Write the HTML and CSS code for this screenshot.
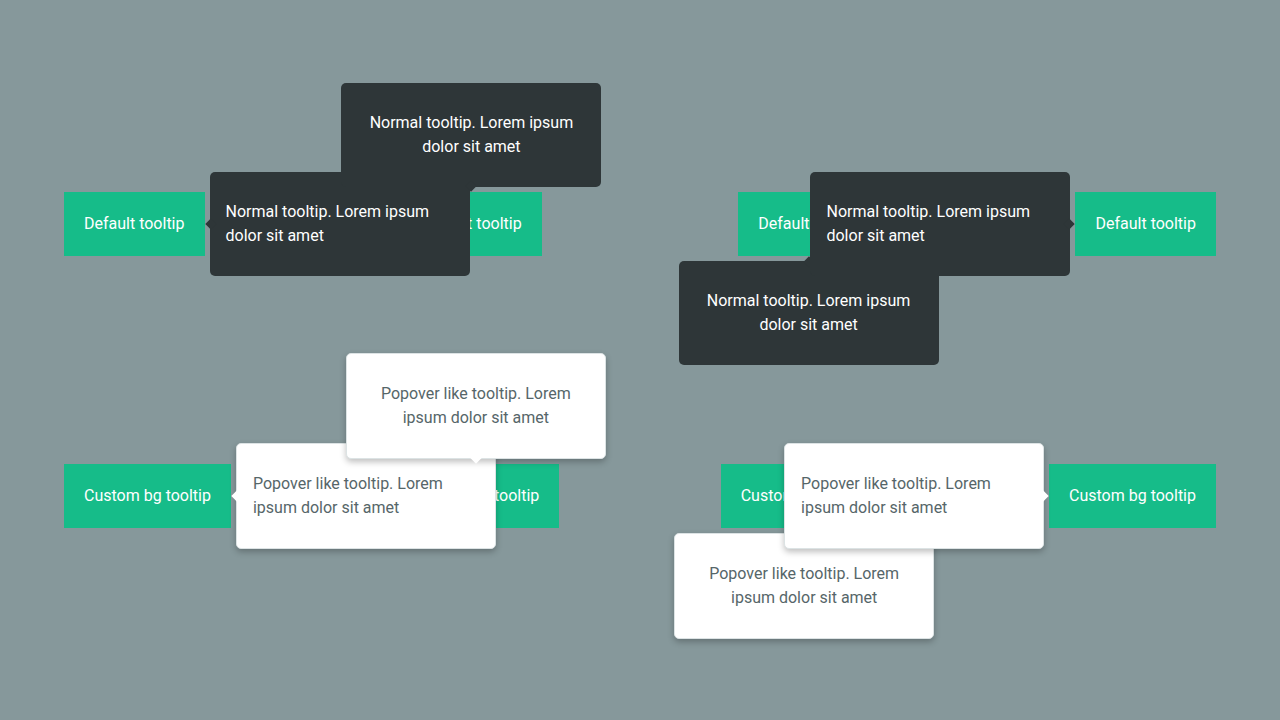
FILE: index.html
```html
<!DOCTYPE html>
<html lang="en">
<head>
<meta charset="utf-8">
<title>Tooltips</title>
<link rel="stylesheet" href="styles.css">
</head>
<body>
<main class="demo">
  <div class="row">
    <div class="item"><button class="trigger" type="button" aria-describedby="t1">Default tooltip</button><div class="tooltip right" role="tooltip" id="t1">Normal tooltip. Lorem ipsum dolor sit amet</div></div>
    <div class="item"><button class="trigger" type="button" aria-describedby="t2">Default tooltip</button><div class="tooltip top" role="tooltip" id="t2">Normal tooltip. Lorem ipsum dolor sit amet</div></div>
    <div class="item"><button class="trigger" type="button" aria-describedby="t3">Default tooltip</button><div class="tooltip bottom" role="tooltip" id="t3">Normal tooltip. Lorem ipsum dolor sit amet</div></div>
    <div class="item"><button class="trigger" type="button" aria-describedby="t4">Default tooltip</button><div class="tooltip left" role="tooltip" id="t4">Normal tooltip. Lorem ipsum dolor sit amet</div></div>
  </div>
  <div class="row">
    <div class="item"><button class="trigger" type="button" aria-describedby="t5">Custom bg tooltip</button><div class="tooltip popover right" role="tooltip" id="t5">Popover like tooltip. Lorem ipsum dolor sit amet</div></div>
    <div class="item"><button class="trigger" type="button" aria-describedby="t6">Custom bg tooltip</button><div class="tooltip popover top" role="tooltip" id="t6">Popover like tooltip. Lorem ipsum dolor sit amet</div></div>
    <div class="item"><button class="trigger" type="button" aria-describedby="t7">Custom bg tooltip</button><div class="tooltip popover bottom" role="tooltip" id="t7">Popover like tooltip. Lorem ipsum dolor sit amet</div></div>
    <div class="item"><button class="trigger" type="button" aria-describedby="t8">Custom bg tooltip</button><div class="tooltip popover left" role="tooltip" id="t8">Popover like tooltip. Lorem ipsum dolor sit amet</div></div>
  </div>
</main>
</body>
</html>
```

FILE: styles.css
```css
* {
  box-sizing: border-box;
}

body {
  margin: 0;
  background: #86989b;
  font: 16px/24px Roboto, "Liberation Sans", sans-serif;
}

.demo {
  display: flex;
  flex-direction: column;
  justify-content: center;
  gap: 208px;
  min-height: 100vh;
  padding: 0 5%;
}

.row {
  display: flex;
  justify-content: space-between;
}

.item {
  position: relative;
}

.trigger {
  display: block;
  padding: 20px;
  border: 0;
  background: #16bc89;
  color: #fff;
  font: inherit;
  white-space: nowrap;
}

.tooltip {
  --surface: #2e3638;
  --arrow-offset: -3px;
  position: absolute;
  z-index: 1;
  width: 260px;
  padding: 28px 16px;
  border-radius: 5px;
  background: var(--surface);
  color: #fff;
}

.tooltip::after {
  content: "";
  position: absolute;
  width: 8px;
  height: 8px;
  background: var(--surface);
  transform: rotate(45deg);
}

.popover {
  --surface: #fff;
  --arrow-offset: -4px;
  border: 1px solid #dce3e4;
  box-shadow: 0 3px 6px rgba(0, 0, 0, 0.25);
  color: #566669;
}

.right,
.left {
  top: 50%;
  transform: translateY(-50%);
}

.right {
  left: calc(100% + 5px);
}

.left {
  right: calc(100% + 5px);
}

.top,
.bottom {
  left: 50%;
  transform: translateX(-50%);
  text-align: center;
}

.top {
  bottom: calc(100% + 5px);
}

.bottom {
  top: calc(100% + 5px);
}

.right::after,
.left::after {
  top: calc(50% - 4px);
}

.right::after {
  left: var(--arrow-offset);
}

.left::after {
  right: var(--arrow-offset);
}

.top::after,
.bottom::after {
  left: calc(50% - 4px);
}

.top::after {
  bottom: var(--arrow-offset);
}

.bottom::after {
  top: var(--arrow-offset);
}
```
